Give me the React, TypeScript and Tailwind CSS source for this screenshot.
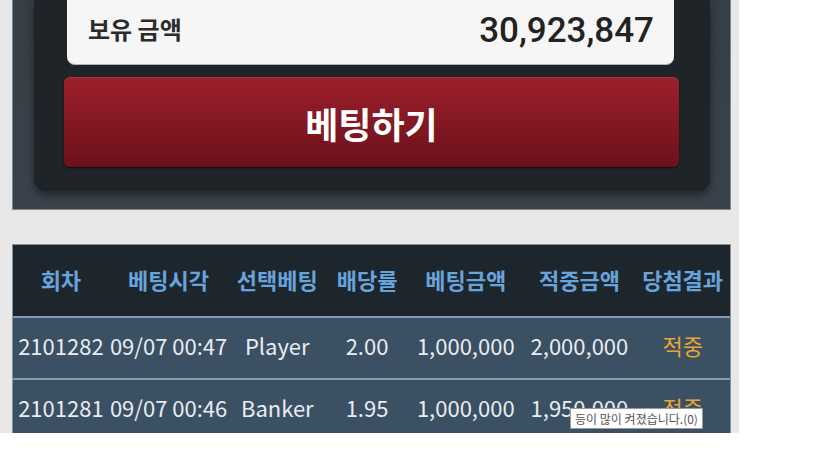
import React from "react";

const cols = ["w-[96px]", "w-[120px]", "w-[98px]", "w-[82px]", "w-[116px]", "w-[112px]", "w-[95px]"];
const headers = ["회차", "베팅시각", "선택베팅", "배당률", "베팅금액", "적중금액", "당첨결과"];
const rows = [
  ["2101282", "09/07 00:47", "Player", "2.00", "1,000,000", "2,000,000", "적중"],
  ["2101281", "09/07 00:46", "Banker", "1.95", "1,000,000", "1,950,000", "적중"],
];

const cjk = '"Noto Sans CJK KR", sans-serif';

export default function App() {
  return (
    <div className="w-[835px] h-[470px] bg-white overflow-hidden relative" style={{ fontFamily: cjk }}>
      <div className="w-[739px] h-[433px] bg-[#e8e8e8] pl-[12px] pr-[8px] overflow-hidden">
        {/* top panel */}
        <div className="h-[210px] bg-gradient-to-b from-[#363e46] to-[#3a434b] border-x border-b border-[#7d868f] pl-[21px] pr-[20px]">
          <div className="h-[191px] bg-[#1f2428] rounded-b-[12px] shadow-[0_4px_8px_rgba(0,0,0,0.45)] pl-[30px] pr-[31px] pt-0">
            <div className="mx-[3px] mr-[5px] h-[65px] bg-[#f6f6f6] rounded-b-[8px] border-b border-[#aab4c8] flex items-center justify-between pl-[21px] pr-[20px]">
              <span className="text-[24px] font-bold text-[#2b2b2b] mb-[6px]">보유 금액</span>
              <span className="text-[35px] font-medium text-[#222] leading-none mb-[4px]" style={{ fontFamily: "Roboto, sans-serif" }}>30,923,847</span>
            </div>
            <div className="mt-[12px] h-[90px] rounded-[6px] bg-gradient-to-b from-[#9c1f2c] to-[#6b111b] border-t border-[#b03040] shadow-[0_1px_2px_rgba(0,0,0,0.6)] flex items-center justify-center">
              <span className="text-[36px] font-bold text-white">베팅하기</span>
            </div>
          </div>
        </div>
        {/* table */}
        <div className="mt-[34px] w-[719px] border border-[#8a9399]">
          <div className="flex h-[71px] bg-[#1e262d] items-center pb-[3px]">
            {headers.map((h, i) => (
              <div key={i} className={`${cols[i]} text-center text-[22px] font-bold text-[#67a4dc] whitespace-nowrap`}>
                {h}
              </div>
            ))}
          </div>
          {rows.map((r, ri) => (
            <div key={ri} className="flex h-[62px] bg-[#3c5063] border-t-2 border-[#7f9db8] items-center pb-[5px]">
              {r.map((c, i) => (
                <div
                  key={i}
                  className={`${cols[i]} text-center whitespace-nowrap text-[22px] ${i === 6 ? "text-[#e6a632]" : "text-[#e8edf1]"}`}
                >
                  {c}
                </div>
              ))}
            </div>
          ))}
        </div>
      </div>
      <div className="absolute left-[570px] top-[408px] w-[133px] h-[21px] bg-white border border-[#9a9a9a] text-[12px] text-[#555] flex items-center justify-center whitespace-nowrap">
        등이 많이 켜졌습니다.(0)
      </div>
    </div>
  );
}
